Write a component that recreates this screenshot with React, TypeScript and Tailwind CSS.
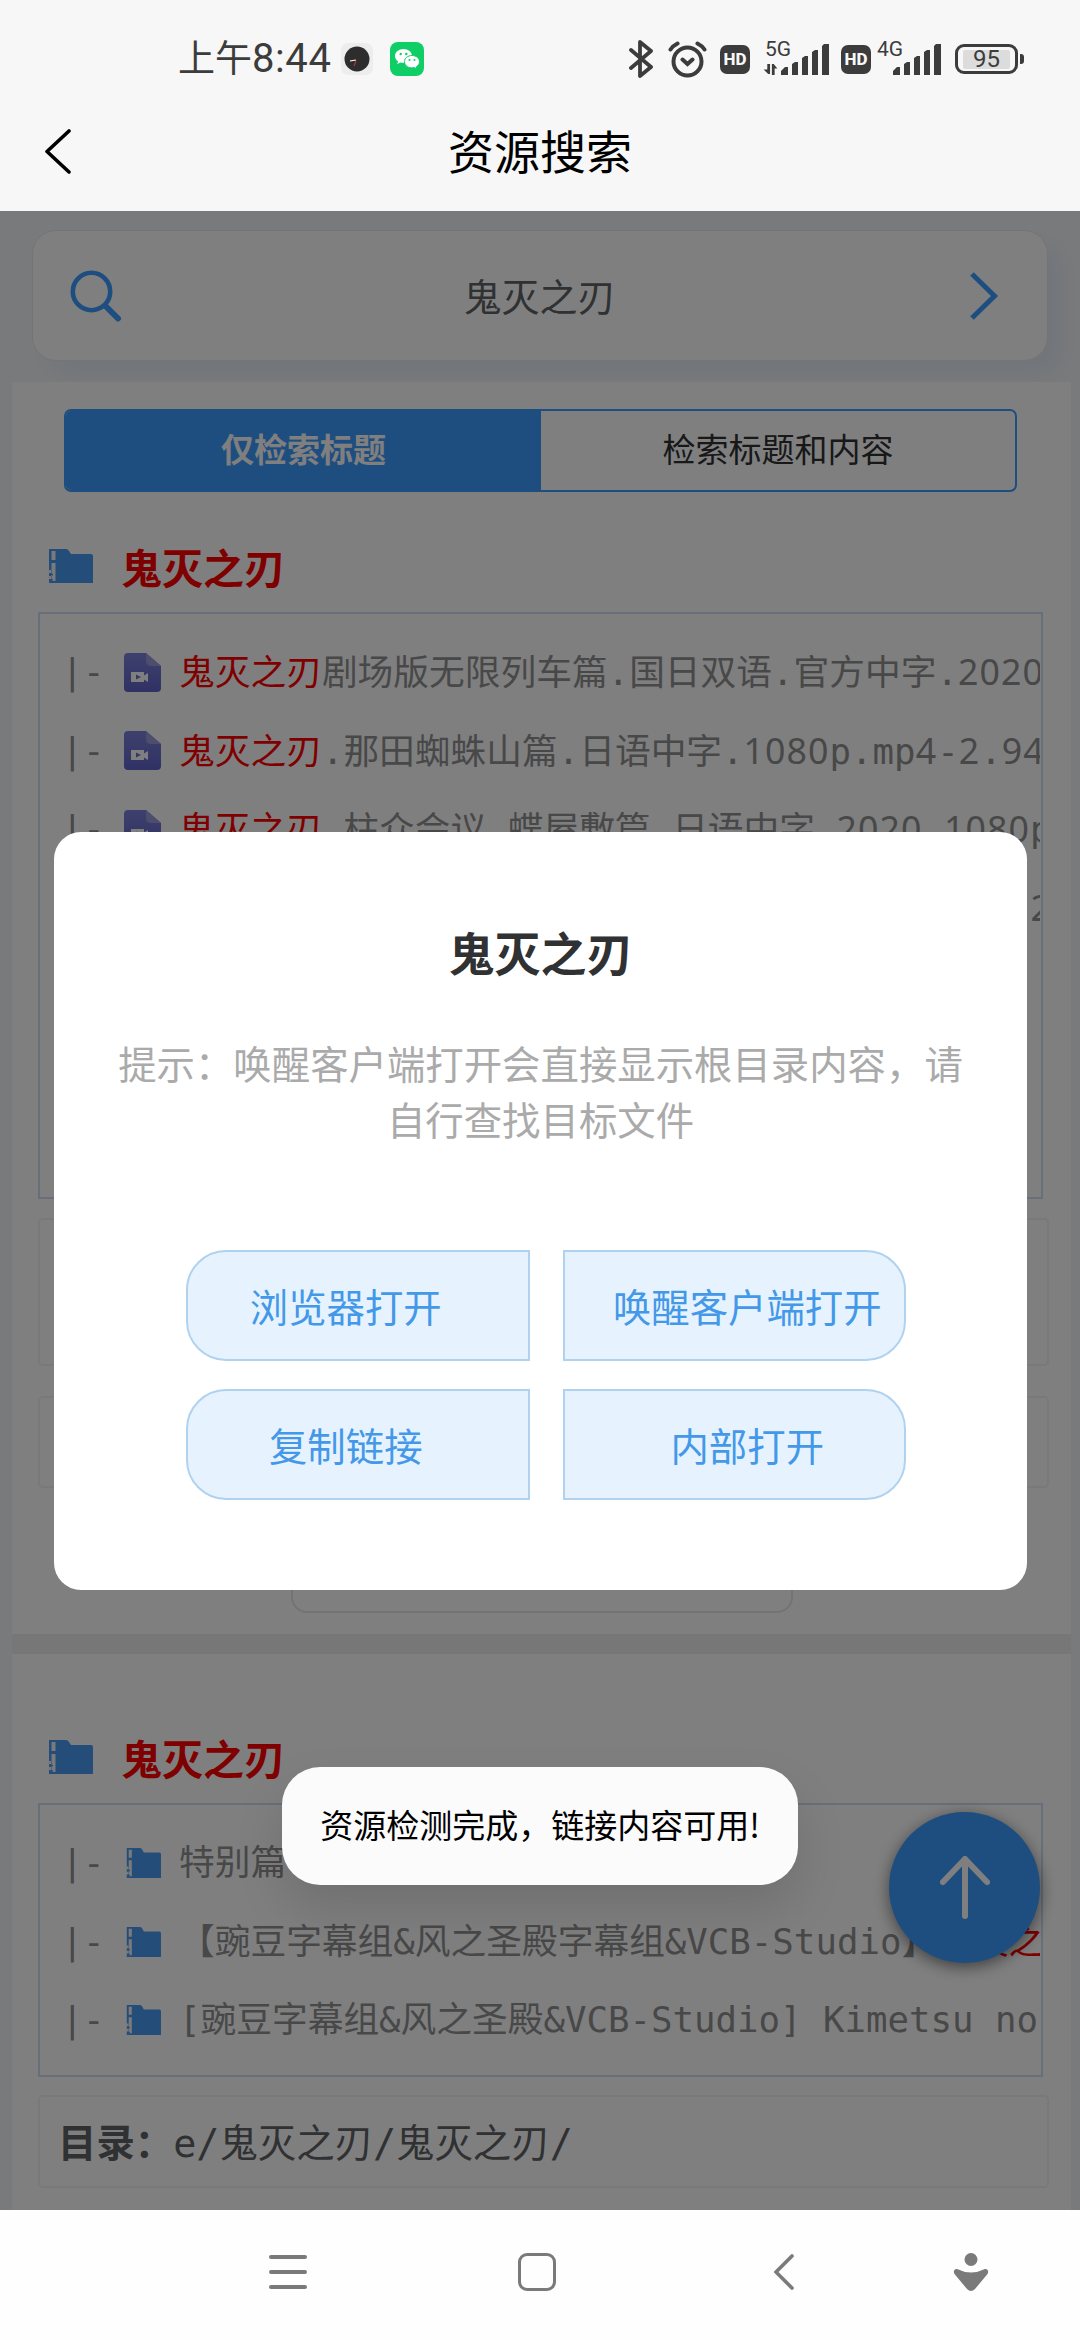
import { clsx } from 'clsx'
import type { ReactNode } from 'react'

type Entry = {
  kind: 'video' | 'folder'
  parts: { text: string; hit?: boolean }[]
}

const KEYWORD = '鬼灭之刃'

const videos: Entry[] = [
  {
    kind: 'video',
    parts: [
      { text: KEYWORD, hit: true },
      { text: '剧场版无限列车篇.国日双语.官方中字.2020' },
    ],
  },
  {
    kind: 'video',
    parts: [
      { text: KEYWORD, hit: true },
      { text: '.那田蜘蛛山篇.日语中字.1080p.mp4-2.94' },
    ],
  },
  {
    kind: 'video',
    parts: [
      { text: KEYWORD, hit: true },
      { text: '.柱众会议.蝶屋敷篇.日语中字.2020.1080p' },
    ],
  },
  {
    kind: 'video',
    parts: [
      { text: KEYWORD, hit: true },
      { text: '.无限列车篇.日语中字.2020.1080p.mp4-2' },
    ],
  },
]

const folders: Entry[] = [
  { kind: 'folder', parts: [{ text: '特别篇' }] },
  {
    kind: 'folder',
    parts: [
      { text: '【豌豆字幕组&风之圣殿字幕组&VCB-Studio】' },
      { text: KEYWORD, hit: true },
    ],
  },
  {
    kind: 'folder',
    parts: [{ text: '[豌豆字幕组&风之圣殿&VCB-Studio] Kimetsu no' }],
  },
]

function SignalBars() {
  return (
    <svg viewBox="0 0 48 31" className="h-[31px] w-[48px]" fill="#3c3c3c">
      <path d="M0 31v-4l4-4h3v8zM11 31V20l3-2h3v13zM21 31V14l3-2h3v19zM31 31V8l3-2h3v25zM41 31V2l2-2h5v31z" />
    </svg>
  )
}

function HdBadge() {
  return (
    <div className="flex h-[29px] w-[30px] items-center justify-center rounded-[7px] bg-[#3c3c3c] font-['Roboto',sans-serif] text-[17px] leading-none font-extrabold text-[#f7f7f7]">
      HD
    </div>
  )
}

function StatusBar() {
  return (
    <div className="flex h-[116px] items-center pt-[2px] pl-[178px]">
      <div className="flex w-[163px] items-center font-['Roboto','Noto_Sans_CJK_SC',sans-serif] text-[37px] leading-none text-[#3c3c3c]">
        <span>上午</span>
        <span className="text-[40px] tracking-[0.6px]">8:44</span>
      </div>
      <div className="flex size-[32px] items-center justify-center rounded-[7px] bg-[#ededed]">
        <svg viewBox="0 0 26 26" className="size-[26px]">
          <circle cx="13" cy="13" r="12.5" fill="#2d2d2d" />
          <path d="M6 15l6-1" stroke="#fff" strokeWidth="1.2" />
          <path d="M10 20l2-5" stroke="#b33" strokeWidth="1.2" />
        </svg>
      </div>
      <svg viewBox="0 0 34 34" className="ml-[17px] size-[34px]">
        <rect width="34" height="34" rx="8" fill="#0fce66" />
        <path
          d="M13.5 7C8.800 7 5 10 5 14c0 2.200 1.200 4 3 5.300L7.300 22l3.200-1.600c1 .3 2 .4 3 .4 4.700 0 8.500-3 8.500-6.800S18.200 7 13.500 7z"
          fill="#fff"
        />
        <path
          d="M22 13.500c-4.200 0-7.500 2.700-7.500 6.200s3.300 6.200 7.500 6.200c.9 0 1.700-.1 2.500-.3L27 27l-.6-2.300c1.900-1.200 3.100-3 3.100-5 0-3.500-3.300-6.200-7.500-6.200z"
          fill="#fff"
          stroke="#0fce66"
        />
        <g fill="#0fce66">
          <circle cx="10.700" cy="12" r="1.200" />
          <circle cx="16.300" cy="12" r="1.200" />
          <circle cx="19.500" cy="18" r="1" />
          <circle cx="24.500" cy="18" r="1" />
        </g>
      </svg>
      <div className="ml-[205px] flex items-center">
        <svg
          viewBox="0 0 24 38"
          className="h-[38px] w-[24px]"
          fill="none"
          stroke="#3c3c3c"
          strokeWidth="3.800"
          strokeLinejoin="round"
          strokeLinecap="round"
        >
          <path d="M2 10l20 17-11 9V2l11 9L2 28" />
        </svg>
        <svg
          viewBox="0 0 39 37"
          className="ml-[15px] h-[37px] w-[39px]"
          fill="none"
          stroke="#3c3c3c"
          strokeWidth="4"
          strokeLinecap="round"
        >
          <circle cx="19.500" cy="20.500" r="14" />
          <path d="M14.500 18.500l5 4.500 5-4.500M2.500 8.500c2-3 4-4.500 7-6M36.500 8.500c-2-3-4-4.500-7-6" />
        </svg>
        <div className="ml-[13px]">
          <HdBadge />
        </div>
        <div className="relative ml-[31px] h-[31px]">
          <SignalBars />
          <span className="absolute -top-[5px] -left-[16px] font-['Roboto',sans-serif] text-[21px] leading-none text-[#3c3c3c]">
            5G
          </span>
          <svg
            viewBox="0 0 15 12"
            className="absolute top-[20px] -left-[18px] h-[11px] w-[15px]"
            fill="#3c3c3c"
          >
            <path d="M4 0h3v11H5L0 6h4zM9 12V0h2l4 5h-3v7z" />
          </svg>
        </div>
        <div className="ml-[12px]">
          <HdBadge />
        </div>
        <div className="relative ml-[22px] h-[31px]">
          <SignalBars />
          <span className="absolute -top-[5px] -left-[16px] font-['Roboto',sans-serif] text-[21px] leading-none text-[#3c3c3c]">
            4G
          </span>
        </div>
        <div className="ml-[14px] flex items-center gap-[2px]">
          <div className="flex h-[30px] w-[63px] items-center justify-center rounded-[9px] border-[3px] border-[#3c3c3c]">
            <div className="flex h-[19px] w-[47px] items-center justify-center rounded-[2px] bg-[#dcdcdc] font-['Roboto',sans-serif] text-[24px] leading-none text-[#3c3c3c]">
              95
            </div>
          </div>
          <div className="h-[10px] w-[4px] rounded-r-[3px] bg-[#3c3c3c]" />
        </div>
      </div>
    </div>
  )
}

function TitleBar() {
  return (
    <div className="grid h-[70px] grid-cols-[1fr_auto_1fr] items-center">
      <svg
        viewBox="0 0 26 45"
        className="ml-[45px] h-[45px] w-[26px]"
        fill="none"
        stroke="#000"
        strokeWidth="3.600"
        strokeLinecap="round"
        strokeLinejoin="round"
      >
        <path d="M24 2L2 22.500 24 43" />
      </svg>
      <h1 className="-mt-[4px] text-[46px] leading-none text-black">
        资源搜索
      </h1>
    </div>
  )
}

function FolderIcon({ className }: { className: string }) {
  return (
    <svg
      viewBox="0 0 45 34"
      preserveAspectRatio="none"
      className={clsx('shrink-0', className)}
    >
      <path d="M1 0h17q2 0 3 2l2 3h20q2 0 2 2v27H1z" fill="#4a9bf5" />
      <path
        d="M3.500 2h4v9h-4zM3.500 14h4v18h-4zM0 21h3v3H0zM0 27h3v3H0z"
        fill="#f4f4f4"
      />
      <path d="M2 25.500h3M2 31h3" stroke="#4a9bf5" strokeWidth="1.500" />
    </svg>
  )
}

function VideoIcon() {
  return (
    <svg viewBox="0 0 37 39" className="h-[39px] w-[37px] shrink-0">
      <defs>
        <linearGradient id="file" x1="0" y1="0" x2="0" y2="1">
          <stop offset="0" stopColor="#7c80da" />
          <stop offset="1" stopColor="#6064c8" />
        </linearGradient>
      </defs>
      <path
        d="M4 0h18l15 13v22q0 4-4 4H4q-4 0-4-4V4q0-4 4-4z"
        fill="url(#file)"
      />
      <path d="M22 0l15 13H27q-5 0-5-5z" fill="#9a9cda" />
      <path d="M7 19h13v3.500l4-2.500v9l-4-2.500V29H7z" fill="#fff" />
      <path d="M12 21.500v5l5-2.500z" fill="#6a6ece" />
    </svg>
  )
}

// The mono face dots its zeros, so runs of digits use the sans face at the same pitch.
function MonoText({ text }: { text: string }) {
  return (
    <>
      {text.split(/(\d+)/).map((run, i) =>
        i % 2 ? (
          <span key={i} className="font-['Noto_Sans'] tracking-[0.03em]">
            {run}
          </span>
        ) : (
          run
        ),
      )}
    </>
  )
}

function EntryRow({ entry }: { entry: Entry }) {
  return (
    <li className="flex h-[78.6px] items-center overflow-hidden font-['DejaVu_Sans_Mono','Noto_Sans_CJK_SC',monospace] text-[35.720px] leading-[78px] whitespace-pre text-[#909193]">
      <span className="w-[62px] shrink-0">|-</span>
      <span className="flex w-[55.500px] shrink-0">
        {entry.kind === 'video' ? (
          <VideoIcon />
        ) : (
          <FolderIcon className="ml-[2px] h-[30px] w-[35px]" />
        )}
      </span>
      <span>
        {entry.parts.map((part) => (
          <span key={part.text} className={clsx(part.hit && 'text-[#ff0000]')}>
            <MonoText text={part.text} />
          </span>
        ))}
      </span>
    </li>
  )
}

function ResultTitle() {
  return (
    <div className="flex items-center pl-[36px]">
      <FolderIcon className="h-[34px] w-[45px]" />
      <h2 className="ml-[28px] text-[41px] leading-[60px] font-bold text-[#ff0000]">
        {KEYWORD}
      </h2>
    </div>
  )
}

function EntryList({
  entries,
  className,
}: {
  entries: Entry[]
  className: string
}) {
  return (
    <ul
      className={clsx(
        'ml-[26px] w-[1005px] border-2 border-[#cfdff5] pr-[1px] pl-[21.500px]',
        className,
      )}
    >
      {entries.map((entry, i) => (
        <EntryRow key={i} entry={entry} />
      ))}
    </ul>
  )
}

function InfoBox({
  className,
  children,
}: {
  className: string
  children?: ReactNode
}) {
  return (
    <div
      className={clsx(
        'ml-[26px] w-[1011px] rounded-[5px] border-2 border-[#f2f2f3]',
        className,
      )}
    >
      {children}
    </div>
  )
}

function SearchBox() {
  return (
    <div className="mx-[32px] mt-[19px] grid h-[131px] grid-cols-[1fr_auto_1fr] items-center rounded-[24px] border border-[#e6e9ee] bg-white pr-[48px] pl-[37px] shadow-[14px_14px_24px_#e2ebf5]">
      <svg
        viewBox="0 0 52 52"
        className="size-[52px]"
        fill="none"
        stroke="#3c9cff"
        strokeLinecap="round"
      >
        <circle cx="21.500" cy="21.500" r="18.700" strokeWidth="4.600" />
        <path d="M35.500 36L48 48.500" strokeWidth="6" />
      </svg>
      <span className="-mt-[2px] ml-[10px] text-[38px] leading-none text-[#606266]">
        {KEYWORD}
      </span>
      <svg
        viewBox="0 0 30 48"
        className="h-[48px] w-[30px] justify-self-end"
        fill="none"
        stroke="#3c9cff"
        strokeWidth="5"
      >
        <path d="M3 2l22.500 22L3 46" />
      </svg>
    </div>
  )
}

function Tabs() {
  return (
    <div className="ml-[52px] flex h-[83px] w-[953px] overflow-hidden rounded-[7px] border-2 border-[#3c9cff] text-[33px] leading-none">
      <div className="flex w-[475px] items-center justify-center bg-[#3c9cff] pb-[5px] font-bold text-white">
        仅检索标题
      </div>
      <div className="flex flex-1 items-center justify-center pb-[5px] text-[#303133]">
        检索标题和内容
      </div>
    </div>
  )
}

function BackToTop() {
  return (
    <div className="absolute top-[1601px] left-[889px] flex size-[151px] items-center justify-center rounded-full bg-[#3c9cff] shadow-[0_4px_16px_rgba(0,0,0,0.5)]">
      <svg
        viewBox="0 0 50 64"
        className="h-[64px] w-[50px]"
        fill="none"
        stroke="#fff"
        strokeWidth="6"
        strokeLinecap="round"
        strokeLinejoin="round"
      >
        <path d="M25 60V3M3 26L25 3l22 23" />
      </svg>
    </div>
  )
}

const actions = [
  { label: '浏览器打开', side: 'left' },
  { label: '唤醒客户端打开', side: 'right' },
  { label: '复制链接', side: 'left' },
  { label: '内部打开', side: 'right' },
]

function Dialog() {
  return (
    <div className="absolute top-[621px] left-[54px] flex h-[758px] w-[973px] flex-col items-center rounded-[27px] bg-white">
      <h3 className="mt-[89px] text-[46px] leading-[60px] font-bold text-[#303133]">
        {KEYWORD}
      </h3>
      <p className="mt-[53px] w-[850px] text-center text-[38.400px] leading-[56px] text-[#aaaaaa]">
        提示：唤醒客户端打开会直接显示根目录内容，请自行查找目标文件
      </p>
      <div className="mt-[104px] ml-[11px] grid grid-cols-2 gap-x-[33px] gap-y-[28px]">
        {actions.map(({ label, side }) => (
          <button
            key={label}
            className={clsx(
              'flex h-[111px] w-[343.500px] items-center justify-center border-2 border-[#b0d2ee] bg-[#e6f3ff] text-[38.400px] leading-none whitespace-nowrap text-[#4498e8]',
              side === 'left'
                ? 'rounded-l-[40px] pr-[24px]'
                : 'rounded-r-[40px] pl-[26px]',
            )}
          >
            {label}
          </button>
        ))}
      </div>
    </div>
  )
}

function Toast() {
  return (
    <div className="absolute top-[1556px] left-[282px] flex h-[118px] w-[516px] items-center justify-center rounded-[38px] bg-[#fbfbfb] pb-[4px] text-[33px] leading-none whitespace-nowrap text-black shadow-[0_24px_50px_rgba(0,0,0,0.12)]">
      资源检测完成，链接内容可用!
    </div>
  )
}

function NavBar() {
  return (
    <nav className="flex h-[130px] items-center bg-[#fefefe] pb-[6px] pl-[269px]">
      <svg
        viewBox="0 0 38 38"
        className="size-[38px]"
        stroke="#7a7a7a"
        strokeWidth="4"
        strokeLinecap="round"
      >
        <path d="M2 4h34M2 19h34M2 34h34" />
      </svg>
      <div className="ml-[211px] size-[38px] rounded-[9px] border-[3.500px] border-[#7a7a7a]" />
      <svg
        viewBox="0 0 20 38"
        className="ml-[218px] h-[38px] w-[20px]"
        fill="none"
        stroke="#7a7a7a"
        strokeWidth="3.600"
        strokeLinecap="round"
      >
        <path d="M18 3L2 19l16 16" />
      </svg>
      <svg
        viewBox="0 0 36 38"
        className="ml-[159px] h-[38px] w-[36px]"
        fill="#7a7a7a"
      >
        <circle cx="18" cy="6.500" r="6.500" />
        <path d="M4 16q14 7 28 0c3-.5 4 3 2.500 5L22 36q-4 4-8 0L1.500 21C0 19 1 15.500 4 16z" />
      </svg>
    </nav>
  )
}

export default function App() {
  return (
    <div className="h-[2340px] w-[1080px] overflow-hidden bg-[#f7f7f7] font-['Noto_Sans_CJK_SC',sans-serif]">
      <header className="h-[211px]">
        <StatusBar />
        <TitleBar />
      </header>
      <main className="relative h-[1999px] overflow-hidden bg-[#f3f5f8]">
        <div className="flex h-[171px] flex-col">
          <SearchBox />
        </div>
        <section className="relative mr-[9px] ml-[12px] h-[1252px] bg-white pt-[27px]">
          <Tabs />
          <div className="mt-[44px]">
            <ResultTitle />
          </div>
          <EntryList entries={videos} className="mt-[16px] h-[587px] pt-[19px]" />
          <InfoBox className="mt-[19px] h-[148px]" />
          <InfoBox className="mt-[30px] h-[92px]" />
          <div className="mx-auto mt-[30px] h-[95px] w-[502px] rounded-[16px] border-2 border-[#e6e7ea]" />
        </section>
        <div className="mr-[9px] ml-[12px] h-[20px] bg-[#eeeeef]" />
        <section className="mr-[9px] ml-[12px] h-[560px] bg-white pt-[73px]">
          <ResultTitle />
          <EntryList entries={folders} className="mt-[16px] h-[274px] pt-[19px]" />
          <InfoBox className="mt-[18px] flex h-[93px] items-center pl-[18px]">
            <p className="font-['DejaVu_Sans_Mono','Noto_Sans_CJK_SC',monospace] text-[38.400px] leading-[80px] text-[#606266]">
              <b className="font-['Noto_Sans_CJK_SC']">目录：</b>
              e/鬼灭之刃/鬼灭之刃/
            </p>
          </InfoBox>
        </section>
        <BackToTop />
        <div className="absolute inset-0 bg-black/50" />
        <Dialog />
        <Toast />
      </main>
      <NavBar />
    </div>
  )
}
